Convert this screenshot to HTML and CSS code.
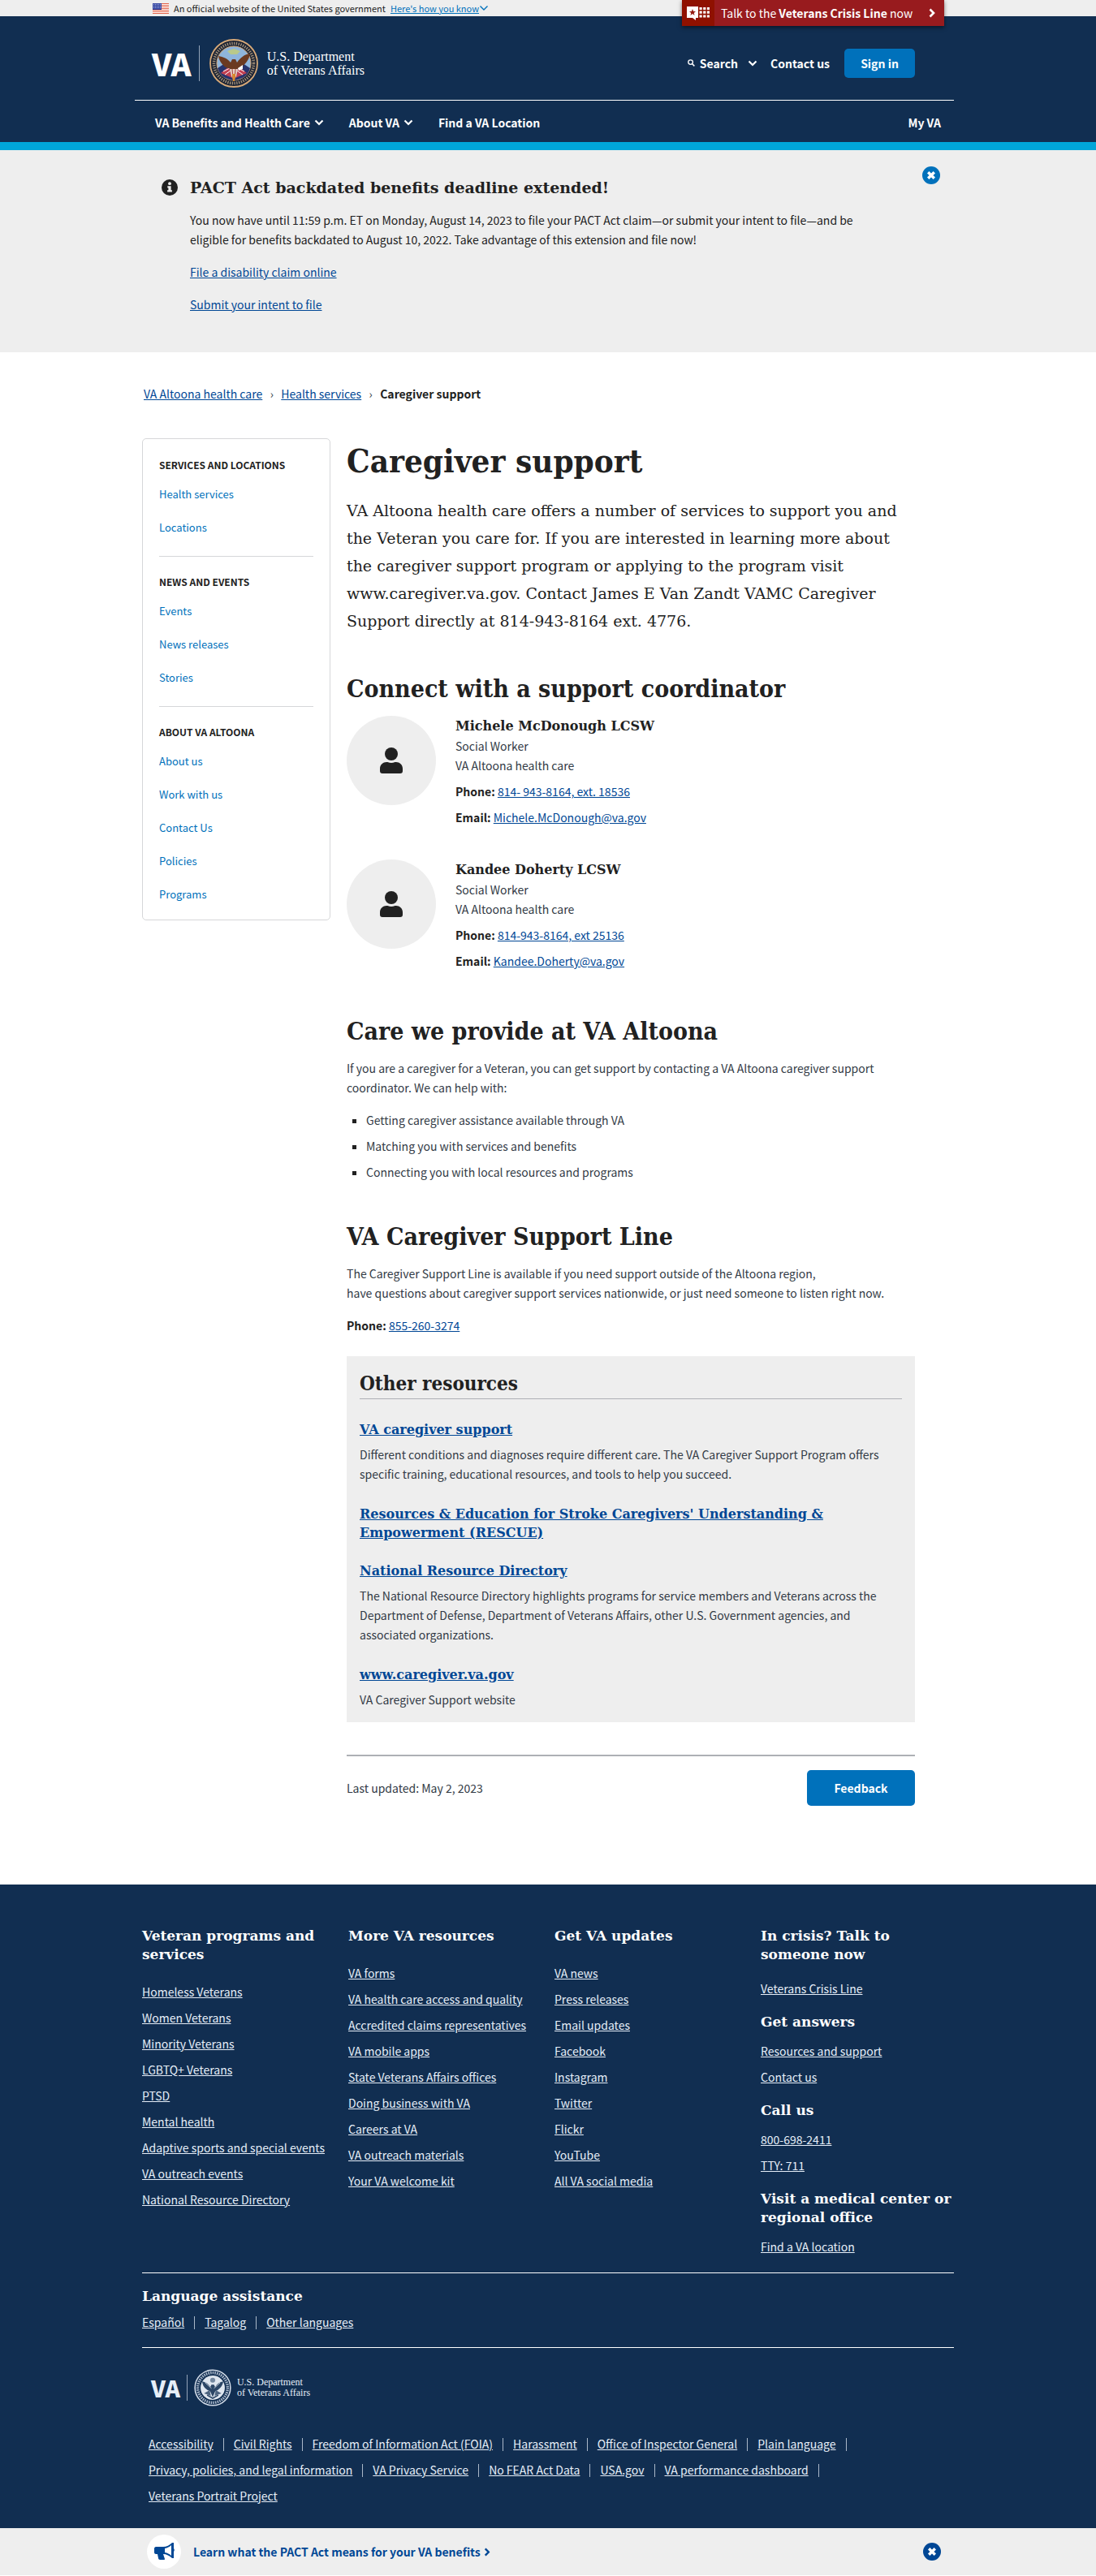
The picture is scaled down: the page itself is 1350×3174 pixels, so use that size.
FILE: index.html
```html
<!DOCTYPE html>
<html lang="en">
<head>
<meta charset="utf-8">
<meta name="viewport" content="width=device-width, initial-scale=1">
<title>Caregiver support | VA Altoona health care</title>
<link rel="stylesheet" href="styles.css">
</head>
<body>
<svg class="defs" aria-hidden="true">
  <symbol id="chev-down" viewBox="0 0 12 8"><path d="M1.5 1.5 6 6l4.500-4.500" fill="none" stroke="currentColor" stroke-width="2.200"/></symbol>
  <symbol id="chev-thin" viewBox="0 0 12 8"><path d="M1.500 1.500 6 6l4.500-4.500" fill="none" stroke="currentColor" stroke-width="1.400"/></symbol>
  <symbol id="chev-right" viewBox="0 0 8 12"><path d="M1.500 1.500 6 6l-4.500 4.500" fill="none" stroke="currentColor" stroke-width="2.600"/></symbol>
  <symbol id="close" viewBox="0 0 22 22"><circle cx="11" cy="11" r="11" fill="currentColor"/><path d="M7.200 7.200l7.600 7.600M14.800 7.200l-7.600 7.600" stroke="#fff" stroke-width="3.400"/></symbol>
  <symbol id="person" viewBox="0 0 28 32"><circle cx="14" cy="8" r="8" fill="currentColor"/><path d="M0 29v-3c0-5 4-8 8-8h1.500c3 1.300 6 1.300 9 0H20c4 0 8 3 8 8v3c0 2-1 3-3 3H3c-2 0-3-1-3-3z" fill="currentColor"/></symbol>
</svg>

<div class="gov">
  <div class="wrap gov-in">
    <svg class="flag" viewBox="0 0 20 13" aria-hidden="true"><rect width="20" height="13" fill="#fff"/><path d="M0 .5h20M0 2.500h20M0 4.500h20M0 6.500h20M0 8.500h20M0 10.500h20M0 12.500h20" stroke="#e2634a"/><rect width="11" height="8" fill="#3b4ba3"/><path d="M1 1.500h9M1 3.500h9M1 5.500h9" stroke="#b9c3ec" stroke-width=".8" stroke-dasharray="1 1"/></svg>
    <span>An official website of the United States government</span>
    <button class="gov-more" type="button"><span>Here's how you know</span><svg viewBox="0 0 12 8" aria-hidden="true"><use href="#chev-thin"/></svg></button>
  </div>
  <a class="crisis" href="#">
    <span class="crisis-icon"><svg viewBox="0 0 28 17" aria-hidden="true"><path d="M0 0h14v14h-3v3l-4-3H0z" fill="#fff"/><path d="M7 3l1.100 3H11L8.700 7.900l.9 3L7 9.100l-2.600 1.800.9-3L3 6h2.900z" fill="#941a11"/><path d="M15.500 2.500h13M15.500 7.200h13M15.500 12h13" stroke="#fff" stroke-width="3.200" stroke-dasharray="3.200 1.500"/></svg></span>
    <span class="crisis-text">Talk to the <b>Veterans Crisis Line</b> now</span>
    <svg class="crisis-go" viewBox="0 0 8 12" aria-hidden="true"><use href="#chev-right"/></svg>
  </a>
</div>

<header class="head">
  <div class="wrap">
    <div class="head-top">
      <a class="logo" href="#">
        <span class="logo-va">VA</span><span class="logo-bar"></span>
        <svg class="seal" viewBox="0 0 60 60" aria-hidden="true">
          <circle cx="30" cy="30" r="29" fill="#1b2334" stroke="#d7a978" stroke-width="1.800"/>
          <circle cx="30" cy="30" r="24.500" fill="none" stroke="#a8947a" stroke-width="3.600" stroke-dasharray="1.300 1.500"/>
          <circle cx="30" cy="30" r="21" fill="#8fb5dc" stroke="#d7a978"/>
          <path d="M10 36c2 8 9 14 20 15 11-1 18-7 20-15l-9-6H19z" fill="#27346e"/>
          <path d="M14 42l10-8 4 14zM46 42l-10-8-4 14z" fill="#c24052"/>
          <path d="M17 40l8-4M19 44l7-5M43 40l-8-4M41 44l-7-5" stroke="#fff"/>
          <path d="M11 21c6 1 11 3 15 8l2-4h4l2 4c4-6 9-10 16-11-1 8-6 13-11 17l-5 2-4 7-4-7-6-2c-5-4-8-8-9-14z" fill="#6b3a22"/>
          <path d="M25 37h10l-2 9-3 5-3-5z" fill="#e7d3c6"/>
          <path d="M28 37l1 13M32 37l-1 13" stroke="#a83a3a"/>
          <path d="M35 36l6-4v5l-5 2z" fill="#fff"/>
          <path d="M22 15l8-3 8 3-4 4h-8z" fill="#b9c98b"/>
          <path d="M28 43h4l-1 9h-2z" fill="#d98c2c"/>
        </svg>
        <span class="logo-text">U.S. Department<br>of Veterans Affairs</span>
      </a>
      <div class="tools">
        <button class="tool" type="button"><svg class="mag" viewBox="0 0 10 10" aria-hidden="true"><circle cx="4" cy="4" r="3.100" fill="none" stroke="currentColor" stroke-width="1.500"/><path d="M6.300 6.300l3 3" stroke="currentColor" stroke-width="1.700"/></svg>Search<svg class="chev tool-chev" viewBox="0 0 12 8" aria-hidden="true"><use href="#chev-down"/></svg></button>
        <a class="tool" href="#">Contact us</a>
        <button class="signin" type="button">Sign in</button>
      </div>
    </div>
    <nav class="nav">
      <button type="button">VA Benefits and Health Care<svg class="chev" viewBox="0 0 12 8" aria-hidden="true"><use href="#chev-down"/></svg></button>
      <button type="button">About VA<svg class="chev" viewBox="0 0 12 8" aria-hidden="true"><use href="#chev-down"/></svg></button>
      <a href="#">Find a VA Location</a>
      <a class="nav-my" href="#">My VA</a>
    </nav>
  </div>
</header>

<section class="alert">
  <div class="wrap alert-in">
    <svg class="info" viewBox="0 0 20 20" aria-hidden="true"><circle cx="10" cy="10" r="10" fill="#212121"/><circle cx="10" cy="5.200" r="1.900" fill="#eee"/><path d="M7.300 8.200h4.300v5h1.300v2.300H7.100v-2.300h1.300v-2.700H7.300z" fill="#eee"/></svg>
    <div class="alert-body">
      <h2>PACT Act backdated benefits deadline extended!</h2>
      <p>You now have until 11:59 p.m. ET on Monday, August 14, 2023 to file your PACT Act claim—or submit your intent to file—and be eligible for benefits backdated to August 10, 2022. Take advantage of this extension and file now!</p>
      <p><a href="#">File a disability claim online</a></p>
      <p><a href="#">Submit your intent to file</a></p>
    </div>
    <button class="close" type="button" aria-label="Close alert"><svg viewBox="0 0 22 22" aria-hidden="true"><use href="#close"/></svg></button>
  </div>
</section>

<nav class="wrap crumbs" aria-label="Breadcrumb">
  <a href="#">VA Altoona health care</a><span class="sep">›</span><a href="#">Health services</a><span class="sep">›</span><b>Caregiver support</b>
</nav>

<div class="wrap layout">
  <nav class="side" aria-label="Section">
    <section><h2>Services and locations</h2>
      <a href="#">Health services</a><a href="#">Locations</a></section>
    <section><h2>News and events</h2>
      <a href="#">Events</a><a href="#">News releases</a><a href="#">Stories</a></section>
    <section><h2>About VA Altoona</h2>
      <a href="#">About us</a><a href="#">Work with us</a><a href="#">Contact Us</a><a href="#">Policies</a><a href="#">Programs</a></section>
  </nav>

  <main class="main">
    <h1>Caregiver support</h1>
    <p class="intro">VA Altoona health care offers a number of services to support you and the Veteran you care for. If you are interested in learning more about the caregiver support program or applying to the program visit www.caregiver.va.gov. Contact James E Van Zandt VAMC Caregiver Support directly at 814-943-8164 ext. 4776.</p>

    <h2>Connect with a support coordinator</h2>
    <div class="person">
      <div class="avatar"><svg viewBox="0 0 28 32" aria-hidden="true"><use href="#person"/></svg></div>
      <div>
        <h3>Michele McDonough LCSW</h3>
        <p>Social Worker</p>
        <p>VA Altoona health care</p>
        <p class="contact"><b>Phone:</b> <a href="#">814- 943-8164, ext. 18536</a></p>
        <p class="contact"><b>Email:</b> <a href="#">Michele.McDonough@va.gov</a></p>
      </div>
    </div>
    <div class="person">
      <div class="avatar"><svg viewBox="0 0 28 32" aria-hidden="true"><use href="#person"/></svg></div>
      <div>
        <h3>Kandee Doherty LCSW</h3>
        <p>Social Worker</p>
        <p>VA Altoona health care</p>
        <p class="contact"><b>Phone:</b> <a href="#">814-943-8164, ext 25136</a></p>
        <p class="contact"><b>Email:</b> <a href="#">Kandee.Doherty@va.gov</a></p>
      </div>
    </div>

    <h2>Care we provide at VA Altoona</h2>
    <p>If you are a caregiver for a Veteran, you can get support by contacting a VA Altoona caregiver support coordinator. We can help with:</p>
    <ul class="bullets">
      <li>Getting caregiver assistance available through VA</li>
      <li>Matching you with services and benefits</li>
      <li>Connecting you with local resources and programs</li>
    </ul>

    <h2>VA Caregiver Support Line</h2>
    <p>The Caregiver Support Line is available if you need support outside of the Altoona region,<br>have questions about caregiver support services nationwide, or just need someone to listen right now.</p>
    <p class="line-phone"><b>Phone:</b> <a href="#">855-260-3274</a></p>

    <section class="other">
      <h2>Other resources</h2>
      <h3><a href="#">VA caregiver support</a></h3>
      <p>Different conditions and diagnoses require different care. The VA Caregiver Support Program offers specific training, educational resources, and tools to help you succeed.</p>
      <h3><a href="#">Resources &amp; Education for Stroke Caregivers' Understanding &amp; Empowerment (RESCUE)</a></h3>
      <h3><a href="#">National Resource Directory</a></h3>
      <p>The National Resource Directory highlights programs for service members and Veterans across the Department of Defense, Department of Veterans Affairs, other U.S. Government agencies, and associated organizations.</p>
      <h3><a href="#">www.caregiver.va.gov</a></h3>
      <p>VA Caregiver Support website</p>
    </section>

    <div class="updated">
      <span>Last updated: May 2, 2023</span>
      <button class="feedback" type="button">Feedback</button>
    </div>
  </main>
</div>

<footer class="foot">
  <div class="wrap">
    <div class="cols">
      <section>
        <h2>Veteran programs and services</h2>
        <ul>
          <li><a href="#">Homeless Veterans</a></li><li><a href="#">Women Veterans</a></li><li><a href="#">Minority Veterans</a></li><li><a href="#">LGBTQ+ Veterans</a></li><li><a href="#">PTSD</a></li><li><a href="#">Mental health</a></li><li><a href="#">Adaptive sports and special events</a></li><li><a href="#">VA outreach events</a></li><li><a href="#">National Resource Directory</a></li>
        </ul>
      </section>
      <section>
        <h2>More VA resources</h2>
        <ul>
          <li><a href="#">VA forms</a></li><li><a href="#">VA health care access and quality</a></li><li><a href="#">Accredited claims representatives</a></li><li><a href="#">VA mobile apps</a></li><li><a href="#">State Veterans Affairs offices</a></li><li><a href="#">Doing business with VA</a></li><li><a href="#">Careers at VA</a></li><li><a href="#">VA outreach materials</a></li><li><a href="#">Your VA welcome kit</a></li>
        </ul>
      </section>
      <section>
        <h2>Get VA updates</h2>
        <ul>
          <li><a href="#">VA news</a></li><li><a href="#">Press releases</a></li><li><a href="#">Email updates</a></li><li><a href="#">Facebook</a></li><li><a href="#">Instagram</a></li><li><a href="#">Twitter</a></li><li><a href="#">Flickr</a></li><li><a href="#">YouTube</a></li><li><a href="#">All VA social media</a></li>
        </ul>
      </section>
      <section class="help">
        <h2>In crisis? Talk to<br>someone now</h2>
        <ul><li><a href="#">Veterans Crisis Line</a></li></ul>
        <h2>Get answers</h2>
        <ul><li><a href="#">Resources and support</a></li><li><a href="#">Contact us</a></li></ul>
        <h2>Call us</h2>
        <ul><li><a href="#">800-698-2411</a></li><li><a href="#">TTY: 711</a></li></ul>
        <h2>Visit a medical center or regional office</h2>
        <ul><li><a href="#">Find a VA location</a></li></ul>
      </section>
    </div>

    <section class="lang">
      <h2>Language assistance</h2>
      <ul class="piped"><li><a href="#">Español</a></li><li><a href="#">Tagalog</a></li><li><a href="#">Other languages</a></li></ul>
    </section>

    <a class="logo logo-small" href="#">
      <span class="logo-va">VA</span><span class="logo-bar"></span>
      <svg class="seal" viewBox="0 0 60 60" aria-hidden="true">
        <circle cx="30" cy="30" r="28.500" fill="none" stroke="#d5deea" stroke-width="2"/>
        <circle cx="30" cy="30" r="24" fill="none" stroke="#a9b7ca" stroke-width="4.500" stroke-dasharray="2 1.500"/>
        <circle cx="30" cy="30" r="19.500" fill="#dfe6ef"/>
        <path d="M13 20c6 1 10 4 13 9l2-4h4l2 4c3-5 7-8 13-9-1 7-5 11-9 14l-4 2-4 9-4-9-4-2c-5-3-8-7-9-14z" fill="#2c4666"/>
        <path d="M16 39l9-5 2 9zM44 39l-9-5-2 9z" fill="#4d6480"/>
        <path d="M18 22l10 9M42 22l-10 9" stroke="#dfe6ef"/>
        <circle cx="30" cy="18" r="4" fill="#7488a0"/>
        <path d="M21 42l9 5 9-5" fill="none" stroke="#2c4666" stroke-width="2"/>
      </svg>
      <span class="logo-text">U.S. Department<br>of Veterans Affairs</span>
    </a>

    <ul class="piped legal">
      <li><a href="#">Accessibility</a></li><li><a href="#">Civil Rights</a></li><li><a href="#">Freedom of Information Act (FOIA)</a></li><li><a href="#">Harassment</a></li><li><a href="#">Office of Inspector General</a></li><li><a href="#">Plain language</a></li><li><a href="#">Privacy, policies, and legal information</a></li><li><a href="#">VA Privacy Service</a></li><li><a href="#">No FEAR Act Data</a></li><li><a href="#">USA.gov</a></li><li><a href="#">VA performance dashboard</a></li><li><a href="#">Veterans Portrait Project</a></li>
    </ul>
  </div>
</footer>

<aside class="promo">
  <div class="wrap promo-in">
    <span class="horn"><svg viewBox="0 0 26 24" aria-hidden="true"><path d="M1 8c0-1 1-2 2-2h9c4 0 8-2 11-5h2v7c1 1 1 3 0 4v8h-2c-3-3-7-5-11-5l2 6c0 1-1 1-1 1H8c-1 0-2-1-2-2l-1-5H3c-1 0-2-1-2-2z" fill="#004795"/><path d="M14 8c3-.5 6-2 8-4v13c-2-2-5-3.500-8-4z" fill="#fff"/></svg></span>
    <a href="#">Learn what the PACT Act means for your VA benefits<svg viewBox="0 0 8 12" aria-hidden="true"><use href="#chev-right"/></svg></a>
    <button class="close" type="button" aria-label="Close promotion"><svg viewBox="0 0 22 22" aria-hidden="true"><use href="#close"/></svg></button>
  </div>
</aside>
</body>
</html>
```
FILE: styles.css
```css
:root {
  --sans: "Noto Sans CJK SC", "Noto Sans", sans-serif;
  --slab: "DejaVu Serif", serif;
  --slab-display: "DejaVu Serif Condensed", "DejaVu Serif", serif;
  --navy: #112e51;
  --blue: #0071bb;
  --link: #004795;
  --ink: #212121;
  --gray: #eee;
}
* { box-sizing: border-box; }
body { margin: 0; background: #fff; color: #323a45; font: 14px/24px var(--sans); }
h1, h2, h3, p, ul { margin: 0; }
ul { padding: 0; list-style: none; }
h1, h2, h3, b { color: var(--ink); }
h1, h2, h3 { font-family: var(--slab); font-weight: 700; }
a { color: var(--link); }
button { border: 0; padding: 0; background: none; color: inherit; font: inherit; cursor: pointer; }
svg { display: block; flex: none; }
.defs { position: absolute; width: 0; height: 0; }
.wrap { max-width: 1000px; margin: 0 auto; }

/* government banner */
.gov { position: relative; background: var(--gray); }
.gov-in { display: flex; align-items: center; gap: 6px; height: 20px; padding-left: 13px; font-size: 11px; line-height: 20px; color: var(--ink); }
.flag { width: 20px; height: 13px; }
.gov-more { display: flex; align-items: center; color: var(--blue); }
.gov-more span { text-decoration: underline; }
.gov-more svg { width: 12px; height: 8px; }
.crisis { position: absolute; top: 0; right: calc(50% - 488px); display: flex; align-items: center; width: 323px; height: 32px; background: #981b1e; box-shadow: 0 2px 5px rgba(0, 0, 0, .5); color: #fff; text-decoration: none; }
.crisis b { color: inherit; }
.crisis-icon { display: flex; align-items: center; justify-content: center; align-self: stretch; width: 40px; background: #8f1100; }
.crisis-icon svg { width: 28px; height: 17px; }
.crisis-text { flex: 1; padding-left: 8px; }
.crisis-go { width: 8px; height: 14px; margin-right: 11px; }

/* header */
.head { background: var(--navy); border-bottom: 10px solid #00a6d9; color: #fff; }
.head a { color: #fff; }
.head-top { display: flex; justify-content: space-between; align-items: center; height: 104px; margin-left: -9px; padding: 12px 48px 0 21px; border-bottom: 1px solid #fff; }
.logo { display: flex; align-items: center; text-decoration: none; color: #fff; }
.logo-va { font-size: 38px; line-height: 44px; font-weight: 900; }
.logo-bar { width: 1px; height: 44px; margin: 0 12px 0 9px; background: #93a3b8; }
.seal { width: 60px; height: 60px; }
.logo-text { margin-left: 11px; font: 16px/17px "Liberation Serif", serif; }
.tools { display: flex; align-items: center; font-weight: 700; }
.tool { display: flex; align-items: center; margin-right: 18px; font-weight: 700; text-decoration: none; }
.mag { width: 9px; height: 9px; margin-right: 6px; }
.chev { width: 12px; height: 8px; }
.tool-chev { margin-left: 12px; margin-right: -2px; }
.signin { width: 87px; height: 36px; border-radius: 5px; background: var(--blue); font-weight: 700; }
.nav { display: flex; height: 51px; padding: 2px 16px 0; gap: 31px; align-items: center; font-weight: 700; }
.nav button { display: flex; align-items: center; gap: 5px; }
.nav a { text-decoration: none; }
.nav-my { margin-left: auto; }

/* alert */
.alert { background: var(--gray); }
.alert-in { display: flex; padding: 20px 17px 31px 24px; }
.info { width: 20px; height: 20px; margin-top: 16px; }
.alert-body { flex: 1; padding: 12px 60px 0 15px; }
.alert-body h2 { font-size: 19px; line-height: 28px; margin-bottom: 14px; }
.alert-body p { margin-bottom: 16px; color: var(--ink); }
.close { width: 22px; height: 22px; color: var(--blue); }
.close svg { width: 22px; height: 22px; }

.crumbs { display: flex; padding: 39px 2px; }
.sep { width: 23px; text-align: center; }

/* body layout */
.layout { display: grid; grid-template-columns: 232px minmax(0, 700px); gap: 20px; align-items: start; padding-bottom: 97px; }
.side { padding: 20px 20px 19px; border: 1px solid #d6d7d9; border-radius: 5px; margin-top: 4px; }
.side section + section { margin-top: 23px; padding-top: 19px; border-top: 1px solid #d6d7d9; }
.side h2 { font: 700 12px/24px var(--sans); text-transform: uppercase; margin-bottom: 12px; }
.side a { display: block; font-size: 13px; line-height: 24px; text-decoration: none; color: var(--blue); }
.side a + a { margin-top: 17px; }

.main h1 { font-family: var(--slab-display); font-size: 40px; line-height: 52px; padding-top: 6px; }
.intro { font: 19px/34px var(--slab); color: var(--ink); margin-top: 18px; }
.main h2 { font-family: var(--slab-display); }
.main > h2 { font-size: 30px; line-height: 40px; margin-bottom: 13px; }
.main .intro + h2 { margin: 47px 0 13px; }
.person { display: flex; gap: 24px; margin-bottom: 40px; }
.person + h2 { margin-top: 55px; }
.avatar { display: flex; align-items: center; justify-content: center; width: 110px; height: 110px; border-radius: 50%; background: var(--gray); color: var(--ink); flex: none; }
.avatar svg { width: 28px; height: 32px; }
.person h3 { font-size: 16px; line-height: 25px; }
.contact { margin-top: 8px; }
.bullets { margin: 16px 0 48px; padding-left: 24px; }
.bullets li { position: relative; }
.bullets li::before { content: ""; position: absolute; left: -17px; top: 11px; width: 5px; height: 5px; background: var(--ink); }
.bullets li + li { margin-top: 8px; }
.line-phone { margin-top: 16px; }

.other { margin-top: 26px; padding: 16px; background: var(--gray); }
.other h2 { font-size: 24px; line-height: 36px; border-bottom: 1px solid #aeb0b5; margin-bottom: 26px; }
.other h3 { font-size: 16px; line-height: 23px; margin-bottom: 7px; }
.other h3 + h3 { margin-top: 24px; }
.other p + h3 { margin-top: 26px; }
.updated { display: flex; justify-content: space-between; align-items: center; margin-top: 40px; padding-top: 17px; border-top: 2px solid #aeb0b5; }
.feedback { width: 133px; height: 44px; border-radius: 5px; background: var(--blue); color: #fff; font-weight: 700; }

/* footer */
.foot { background: var(--navy); padding: 52px 0 20px; color: #fff; }
.foot a { color: #e6eef8; }
.foot h2 { font-size: 17px; line-height: 23px; color: #fff; }
.cols { display: grid; grid-template-columns: repeat(4, minmax(0, 1fr)); gap: 16px; padding-bottom: 20px; border-bottom: 1px solid #fff; }
.cols h2 { margin-bottom: 22px; }
.cols li + li { margin-top: 8px; }
.help h2 { margin-bottom: 12px; }
.help h2:first-child { margin-bottom: 18px; }
.help ul + h2 { margin-top: 18px; }
.lang { padding: 17px 0 19px; border-bottom: 1px solid #fff; }
.lang h2 { margin-bottom: 8px; }
.piped { display: flex; flex-wrap: wrap; }
.piped li:not(:last-child)::after { content: ""; display: inline-block; height: 16px; margin: 0 12px; border-left: 1px solid #aab8c9; vertical-align: -3px; }
.logo-small { padding: 26px 11px 26px; }
.logo-small .logo-va { font-size: 28px; line-height: 32px; }
.logo-small .logo-bar { height: 32px; margin: 0 8px; }
.logo-small .seal { width: 46px; height: 46px; }
.logo-small .logo-text { margin-left: 7px; font-size: 12px; line-height: 13px; }
.legal { padding: 8px; row-gap: 8px; }

.promo { background: var(--gray); }
.promo-in { display: flex; align-items: center; height: 58px; padding: 0 16px 0 6px; }
.horn { display: flex; align-items: center; justify-content: center; width: 42px; height: 42px; border-radius: 50%; background: #fff; }
.horn svg { width: 26px; height: 24px; }
.promo a { display: flex; align-items: center; gap: 4px; margin: 0 auto 0 15px; font-weight: 700; text-decoration: none; }
.promo a svg { width: 8px; height: 11px; }
.promo .close { color: var(--link); }
```
